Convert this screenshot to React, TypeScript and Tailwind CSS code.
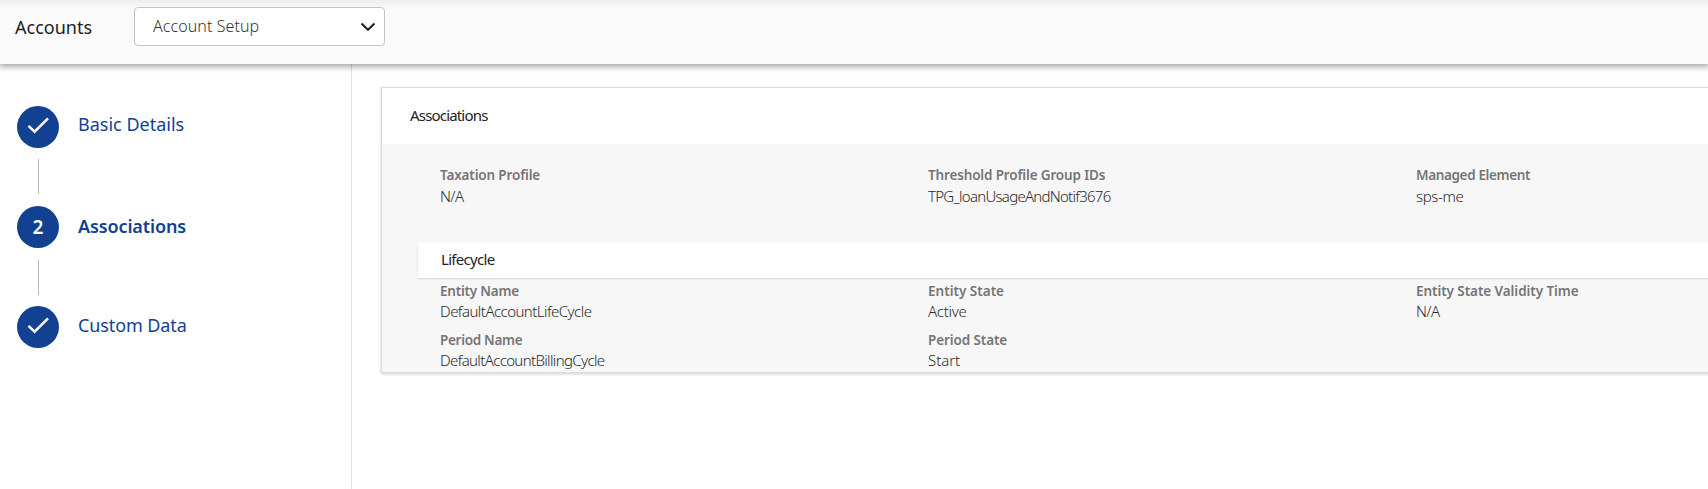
type FieldProps = { label: string; labelClass: string; value: string; valueClass: string; gap?: string };

function Field({ label, labelClass, value, valueClass, gap = "" }: FieldProps) {
  return (
    <div className={`flex w-[488px] shrink-0 flex-col whitespace-nowrap ${gap}`}>
      <span className={`h-5 text-[13.5px] leading-5 font-semibold text-[#757575] ${labelClass}`}>{label}</span>
      <span className={`h-5 text-[15px] leading-5 font-light text-[#2a2a2a] ${valueClass}`}>{value}</span>
    </div>
  );
}

function CheckCircle() {
  return (
    <div className="size-[42px] shrink-0 rounded-full bg-[#124191]">
      <svg width="42" height="42" viewBox="0 0 42 42" fill="none" stroke="#fff" strokeWidth="2.5">
        <path d="M11.5 19.8 L17.6 25.7 L31 12.3" />
      </svg>
    </div>
  );
}

function Connector() {
  return <div className="ml-[21px] h-[35px] w-px bg-[#b8b8b8]" />;
}

export default function App() {
  return (
    <div className="flex h-[489px] w-full flex-col overflow-hidden bg-white font-['Noto_Sans',sans-serif]">
      <header className="z-10 flex h-16 shrink-0 items-start bg-[#fafafa] bg-linear-to-b from-[#ededed] to-[#fafafa] to-[8px] shadow-[0_2px_6px_1px_rgba(0,0,0,0.34)]">
        <h1 className="w-[120px] pt-[15px] pl-[15px] text-[18px] leading-6 tracking-[0px] text-[#222]">Accounts</h1>
        <div className="mt-[7px] ml-[14px] flex h-[39px] w-[251px] items-center justify-between rounded-[4px] border border-[#c4c4c4] bg-white pr-[8px] pl-[18px]">
          <span className="pb-[2px] text-[16px] leading-6 font-[350] tracking-[0.08px] text-[#333]">Account Setup</span>
          <svg width="16" height="10" viewBox="0 0 16 10" fill="none" stroke="#222" strokeWidth="2">
            <path d="M1.5 1.5 L8 7.8 L14.5 1.5" />
          </svg>
        </div>
      </header>
      <div className="flex min-h-0 flex-1">
        <nav className="w-[352px] shrink-0 border-r border-[#e2e2e2] pt-[42px] pl-[17px] text-[18px] leading-6 text-[#124191]">
          <div className="flex h-[42px] items-start gap-[19px]">
            <CheckCircle />
            <span className="pt-[6px] tracking-[0px]">Basic Details</span>
          </div>
          <div className="flex h-[58px] items-start pt-[11px]"><Connector /></div>
          <div className="flex h-[42px] items-start gap-[19px]">
            <div className="flex size-[42px] shrink-0 items-center justify-center rounded-full bg-[#124191] text-[19px] font-semibold text-white">2</div>
            <span className="pt-[8px] font-semibold tracking-[-0.12px]">Associations</span>
          </div>
          <div className="flex h-[58px] items-start pt-[12px]"><Connector /></div>
          <div className="flex h-[42px] items-start gap-[19px]">
            <CheckCircle />
            <span className="pt-[7px] tracking-[-0.1px]">Custom Data</span>
          </div>
        </nav>
        <main className="min-w-0 flex-1 overflow-hidden pt-[23px] pl-[29px]">
          <section className="h-[286px] w-[1500px] border border-[#dcdcdc] bg-[#f7f7f7] shadow-[0_1px_3px_rgba(0,0,0,0.2)]">
            <h2 className="h-14 bg-white pt-[17px] pl-[28px] text-[15px] leading-5 tracking-[-0.82px] text-[#222]">Associations</h2>
            <div className="flex h-[98px] pt-[21px] pl-[58px]">
              <Field gap="gap-px" label="Taxation Profile" labelClass="tracking-[-0.15px]" value="N/A" valueClass="tracking-[-0.6px]" />
              <Field gap="gap-px" label="Threshold Profile Group IDs" labelClass="tracking-[-0.15px]" value="TPG_loanUsageAndNotif3676" valueClass="tracking-[-0.73px]" />
              <Field gap="gap-px" label="Managed Element" labelClass="tracking-[-0.36px]" value="sps-me" valueClass="tracking-[-0.35px]" />
            </div>
            <h3 className="ml-[36px] h-9 rounded-tl-[3px] bg-white pt-[7px] pl-[23px] text-[15px] leading-5 tracking-[-0.7px] text-[#222] shadow-[0_1px_2px_rgba(0,0,0,0.15)]">Lifecycle</h3>
            <div className="flex h-[49px] pt-[3px] pl-[58px]">
              <Field label="Entity Name" labelClass="tracking-[-0.22px]" value="DefaultAccountLifeCycle" valueClass="tracking-[-0.54px]" />
              <Field label="Entity State" labelClass="tracking-[0px]" value="Active" valueClass="tracking-[-0.3px]" />
              <Field label="Entity State Validity Time" labelClass="tracking-[-0.07px]" value="N/A" valueClass="tracking-[-0.6px]" />
            </div>
            <div className="flex pt-[3px] pl-[58px]">
              <Field label="Period Name" labelClass="tracking-[-0.3px]" value="DefaultAccountBillingCycle" valueClass="tracking-[-0.64px]" />
              <Field label="Period State" labelClass="tracking-[-0.1px]" value="Start" valueClass="tracking-[-0.05px]" />
            </div>
          </section>
        </main>
      </div>
    </div>
  );
}
